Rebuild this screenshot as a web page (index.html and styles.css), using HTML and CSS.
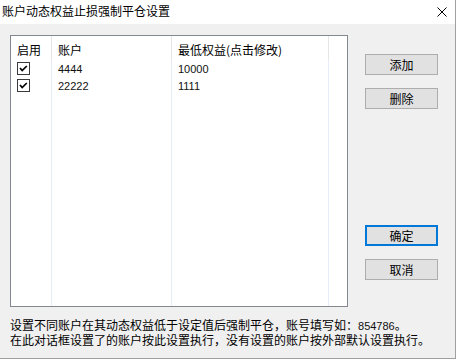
FILE: index.html
```html
<!DOCTYPE html>
<html lang="zh-CN">
<head>
<meta charset="utf-8">
<title>账户动态权益止损强制平仓设置</title>
<link rel="stylesheet" href="styles.css">
</head>
<body>
<div class="window">
  <div class="titlebar">
    <span class="title">账户动态权益止损强制平仓设置</span>
    <span class="close">
      <svg width="10" height="10" viewBox="0 0 10 10"><path d="M0.5 0.5 L9.5 9.5 M9.5 0.5 L0.5 9.5" stroke="#000" stroke-width="1" fill="none"/></svg>
    </span>
  </div>
  <div class="content">
    <div class="main">
      <div class="listbox">
        <div class="grid">
          <div class="hcell">启用</div>
          <div class="hcell">账户</div>
          <div class="hcell">最低权益(点击修改)</div>
          <div class="hcell last"></div>

          <div class="cell"><svg class="check" width="13" height="13" viewBox="0 0 13 13"><rect x="0.5" y="0.5" width="12" height="12" fill="#fff" stroke="#3a3a3a"/><path d="M3 6 L5.2 8.6 L9.8 4" fill="none" stroke="#000" stroke-width="1.7"/></svg></div>
          <div class="cell"><span class="num">4444</span></div>
          <div class="cell"><span class="num">10000</span></div>
          <div class="cell last"></div>

          <div class="cell"><svg class="check" width="13" height="13" viewBox="0 0 13 13"><rect x="0.5" y="0.5" width="12" height="12" fill="#fff" stroke="#3a3a3a"/><path d="M3 6 L5.2 8.6 L9.8 4" fill="none" stroke="#000" stroke-width="1.7"/></svg></div>
          <div class="cell"><span class="num">22222</span></div>
          <div class="cell"><span class="num">1111</span></div>
          <div class="cell last"></div>

          <div class="cell"></div>
          <div class="cell"></div>
          <div class="cell"></div>
          <div class="cell last"></div>
        </div>
      </div>
      <div class="buttons">
        <div class="btn-group">
          <button class="btn">添加</button>
          <button class="btn">删除</button>
        </div>
        <div class="btn-group">
          <button class="btn default">确定</button>
          <button class="btn">取消</button>
        </div>
      </div>
    </div>
    <p class="note">设置不同账户在其动态权益低于设定值后强制平仓，账号填写如：<span class="num">854786</span>。<br>在此对话框设置了的账户按此设置执行，没有设置的账户按外部默认设置执行。</p>
  </div>
</div>
</body>
</html>
```

FILE: styles.css
```css
html, body {
  margin: 0;
  padding: 0;
  background: #ffffff;
}

body {
  font-family: "Noto Sans CJK SC", "Microsoft YaHei", sans-serif;
  font-size: 12px;
  color: #000;
}

.window {
  box-sizing: border-box;
  width: 456px;
  height: 359px;
  border-right: 1px solid #a0a0a0;
  border-bottom: 1px solid #a0a0a0;
  background: #f0f0f0;
  display: flex;
  flex-direction: column;
}

.titlebar {
  height: 24px;
  flex: none;
  background: #ffffff;
  display: flex;
  align-items: center;
  justify-content: space-between;
  padding: 0 8px 0 2px;
}

.title {
  line-height: 16px;
  margin-top: -2px;
  color: #000;
}

.close {
  display: flex;
  width: 10px;
  height: 10px;
}

.content {
  flex: 1;
  display: flex;
  flex-direction: column;
  padding: 11px 0 0 10px;
}

.main {
  display: flex;
  height: 272px;
}

.listbox {
  box-sizing: border-box;
  width: 338px;
  height: 272px;
  border: 1px solid #828790;
  background: #ffffff;
}

.grid {
  display: grid;
  grid-template-columns: 41px 120px 157px 1fr;
  grid-template-rows: 24px 17px 17px 1fr;
  height: 100%;
}

.hcell, .cell {
  box-sizing: border-box;
  display: flex;
  align-items: center;
  padding-left: 6px;
  white-space: nowrap;
}

.hcell {
  border-right: 1px solid #e5e5e5;
  padding-top: 2px;
}

.cell {
  border-right: 1px solid #e6edf8;
}

.hcell.last, .cell.last {
  border-right: none;
}

.check {
  display: block;
}

.num {
  font-family: "Liberation Sans", Arial, sans-serif;
  font-size: 11px;
  color: #111;
}

.buttons {
  margin-left: 17px;
  width: 73px;
  display: flex;
  flex-direction: column;
  justify-content: space-between;
  padding: 19px 0 27px;
}

.btn-group {
  display: flex;
  flex-direction: column;
  gap: 13px;
}

.btn {
  box-sizing: border-box;
  width: 73px;
  height: 21px;
  margin: 0;
  padding: 0;
  background: #e1e1e1;
  border: 1px solid #adadad;
  font: inherit;
  color: #000;
  line-height: 17px;
}

.btn.default {
  border: 2px solid #0078d7;
}

.note {
  margin: 11px 0 0;
  line-height: 13px;
  white-space: nowrap;
}
```
